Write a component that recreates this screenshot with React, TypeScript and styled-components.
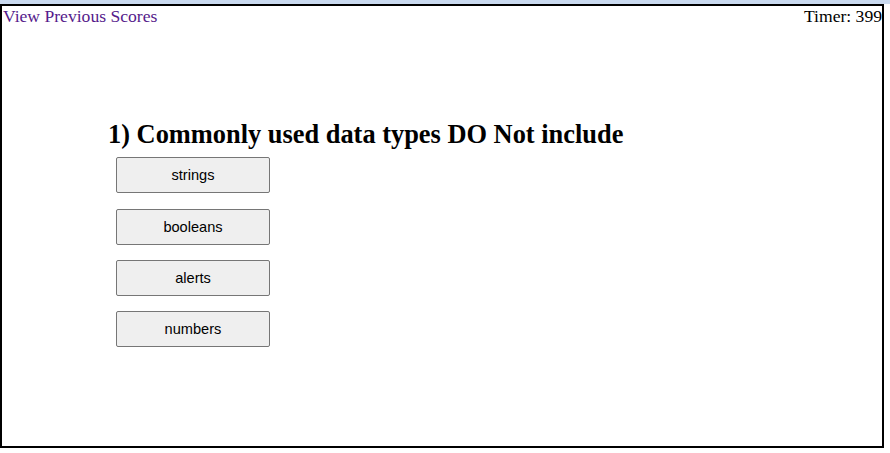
import React from "react";
import styled, { createGlobalStyle } from "styled-components";

const Global = createGlobalStyle`
  html, body { margin: 0; padding: 0; background: #ffffff; }
  body { font-family: "Liberation Serif", "Times New Roman", serif; }
`;

const TopStrip = styled.div`
  height: 4px;
  background: #c9d9ef;
`;

const Frame = styled.div`
  box-sizing: border-box;
  width: 884px;
  height: 444px;
  border: 2px solid #000000;
  display: flex;
  flex-direction: column;
`;

const Header = styled.header`
  display: flex;
  justify-content: space-between;
  align-items: flex-start;
  font-size: 17.6px;
  line-height: 20px;
  padding-left: 1px;
`;

const ScoresLink = styled.a`
  color: #551a8b;
  text-decoration: none;
  cursor: pointer;
`;

const Timer = styled.span`
  color: #000000;
`;

const Quiz = styled.section`
  margin: 93px 0 0 106px;
  display: flex;
  flex-direction: column;
`;

const Question = styled.h2`
  margin: 0;
  font-size: 26.4px;
  line-height: 30px;
  font-weight: bold;
  color: #000000;
`;

const Choices = styled.div`
  display: flex;
  flex-direction: column;
  gap: 15.33px;
  margin: 8.3px 0 0 8px;
`;

const Choice = styled.button`
  box-sizing: border-box;
  width: 154px;
  height: 36px;
  background: #efefef;
  border: 1px solid #767676;
  border-radius: 2px;
  font-family: "Liberation Sans", Arial, sans-serif;
  font-size: 14.6px;
  color: #000000;
  padding: 0;
  cursor: pointer;
`;

const choices = ["strings", "booleans", "alerts", "numbers"];

export default function App() {
  return (
    <>
      <Global />
      <TopStrip />
      <Frame>
        <Header>
          <ScoresLink>View Previous Scores</ScoresLink>
          <Timer>Timer: 399</Timer>
        </Header>
        <Quiz>
          <Question>1) Commonly used data types DO Not include</Question>
          <Choices>
            {choices.map((c) => (
              <Choice key={c}>{c}</Choice>
            ))}
          </Choices>
        </Quiz>
      </Frame>
    </>
  );
}
